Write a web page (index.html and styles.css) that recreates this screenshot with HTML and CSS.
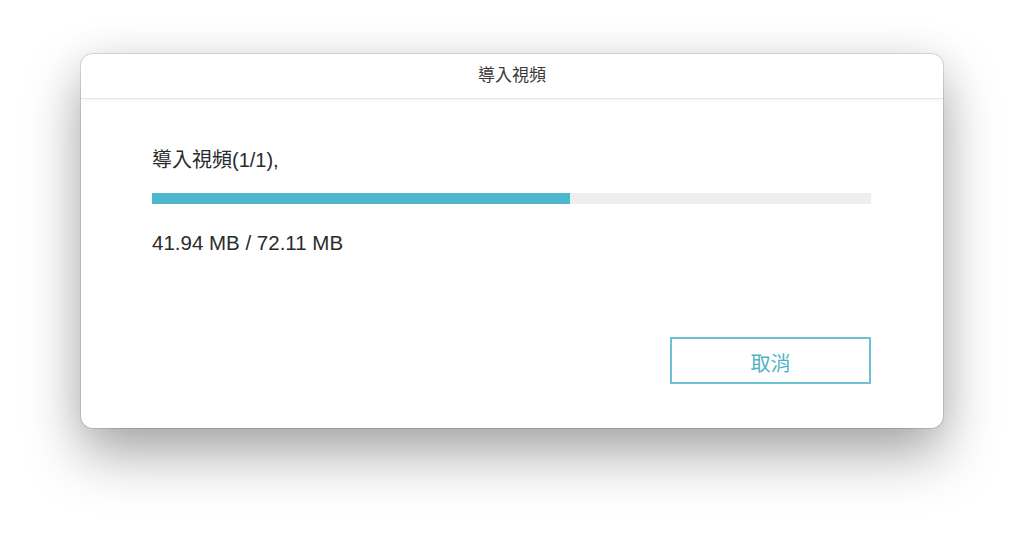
FILE: index.html
```html
<!DOCTYPE html>
<html lang="zh-Hant">
<head>
  <meta charset="UTF-8">
  <meta name="viewport" content="width=device-width, initial-scale=1.0">
  <title>導入視頻</title>
  <link rel="stylesheet" href="styles.css">
</head>
<body>
  <div class="window">
    <div class="titlebar">導入視頻</div>

    <div class="content">
      <p class="label">導入視頻(1/1),</p>

      <div class="progress">
        <div class="progress-fill" style="width: 58.16%;"></div>
      </div>

      <p class="size">41.94 MB / 72.11 MB</p>

      <div class="actions">
        <button class="btn-cancel">取消</button>
      </div>
    </div>
  </div>
</body>
</html>
```

FILE: styles.css
```css
html, body {
  height: 100%;
}
body {
  font-family: "Liberation Sans", Arial, "Noto Sans CJK TC", sans-serif;
  margin: 0;
  padding: 54px 0 0;
  box-sizing: border-box;
  min-height: 535px;
  background-color: #ffffff;
  color: #2b2b2b;
  overflow: hidden;
}
.window {
  width: 862px;
  height: 374px;
  margin: 0 auto;
  box-sizing: border-box;
  background-color: #ffffff;
  border-radius: 12px;
  overflow: hidden;
  box-shadow: 0 0 0 1px rgba(0, 0, 0, 0.12), 0 26px 55px rgba(0, 0, 0, 0.34), 0 0 40px rgba(0, 0, 0, 0.06);
}
.titlebar {
  height: 44px;
  line-height: 44px;
  text-align: center;
  font-size: 17px;
  color: #3a3a3a;
  border-bottom: 1px solid #e4e4e4;
  box-shadow: 0 2px 4px rgba(0, 0, 0, 0.04);
  position: relative;
}
.content {
  padding: 49px 72px 0 71px;
}
.label {
  margin: 0;
  font-size: 20px;
  line-height: 24px;
}
.progress {
  margin-top: 21px;
  height: 11px;
  background-color: #eeeeee;
}
.progress-fill {
  height: 100%;
  background-color: #4db8cd;
}
.size {
  margin: 27px 0 0;
  font-size: 20.5px;
  line-height: 24px;
}
.actions {
  display: flex;
  justify-content: flex-end;
  margin-top: 82px;
}
.btn-cancel {
  width: 201px;
  height: 47px;
  background-color: #ffffff;
  border: 2px solid #6cc2d0;
  font-family: "Liberation Sans", Arial, "Noto Sans CJK TC", sans-serif;
  font-size: 20px;
  color: #4fb3c6;
  padding: 3px 0 0;
  cursor: pointer;
}
```
